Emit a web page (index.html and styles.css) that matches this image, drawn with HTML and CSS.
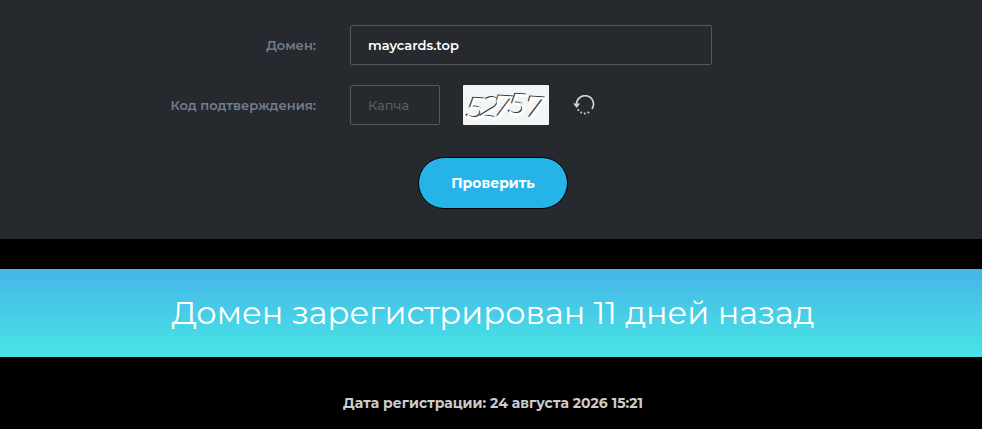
FILE: index.html
```
<!DOCTYPE html>
<html lang="ru">
<head>
    <meta charset="UTF-8">
    <meta name="viewport" content="width=device-width, initial-scale=1.0">
    <title>Проверка домена</title>
    <link rel="stylesheet" href="styles.css">
</head>
<body>
    <form class="check-form">
        <div class="row">
            <label for="domain">Домен:</label>
            <input type="text" id="domain" class="field" value="maycards.top">
        </div>
        <div class="row">
            <label for="captcha">Код подтверждения:</label>
            <div class="captcha">
                <input type="text" id="captcha" class="field field-short" placeholder="Капча">
                <svg class="captcha-image" width="86" height="40" viewBox="0 0 86 40" role="img" aria-label="Код">
                    <rect width="86" height="40" rx="1" fill="#f1f5f6"/>
                    <g class="digits">
                        <text x="4" y="34" transform="rotate(3 12 22)">5</text>
                        <text x="19" y="33" transform="rotate(8 27 22)">2</text>
                        <text x="31" y="32" transform="rotate(4 40 22)">7</text>
                        <text x="46" y="30" transform="rotate(3 54 20)">5</text>
                        <text x="63" y="33" transform="rotate(4 73 22)">7</text>
                    </g>
                </svg>
                <button type="button" class="refresh" aria-label="Обновить код">
                    <svg width="22" height="20" viewBox="0 0 22 20" fill="none">
                        <path d="M3.5 9.5A8.5 8.5 0 1 1 19 14" stroke="#d0d3d6" stroke-width="1.7"/>
                        <path d="M0 8.5H7.2L3.7 13Z" fill="#d0d3d6"/>
                        <g fill="#d0d3d6">
                            <circle cx="5.3" cy="15" r="1"/>
                            <circle cx="8.2" cy="17.5" r="1"/>
                            <circle cx="11.8" cy="18.5" r="1"/>
                            <circle cx="15.4" cy="17.5" r="1"/>
                        </g>
                    </svg>
                </button>
            </div>
        </div>
        <button type="submit" class="submit">Проверить</button>
    </form>

    <h1 class="result">Домен зарегистрирован 11 дней назад</h1>
    <p class="date">Дата регистрации: 24 августа 2026 15:21</p>
</body>
</html>
```
FILE: styles.css
```
* { box-sizing: border-box; }
body { margin: 0; background: #000; color: #ccc; font-family: Montserrat, Inter, "Open Sans", sans-serif; font-size: 14px; }

.check-form { padding: 25px 16px 30px 20px; background: #26292e; }
.row { display: grid; grid-template-columns: 216px 362px; column-gap: 34px; align-items: center; max-width: 786px; margin: 0 auto 20px; }
.row label { color: #717e91; font-size: 13px; font-weight: 600; text-align: right; }
.field { width: 100%; height: 40px; padding: 0 17px; border: 1px solid #55585c; border-radius: 2px; background: transparent; color: #fff; font-family: inherit; font-size: 13px; font-weight: 600; }
.field::placeholder { color: #5c5c5c; font-weight: 500; opacity: 1; }
.field-short { width: 90px; }

.captcha { display: flex; align-items: center; }
.captcha-image { margin-left: 23px; overflow: visible; }
.digits { fill: #fff; font-family: Montserrat, "Open Sans", sans-serif; font-size: 30px; font-style: italic; font-weight: 400; text-shadow: -1px -1px 0 #333, 0 0 2px #fff, 1px 1px 2px #fff; }
.refresh { display: flex; margin-left: 24px; padding: 0; border: 0; background: none; cursor: pointer; }

.submit { display: block; width: 150px; height: 52px; margin: 32px auto 0; border: 1px solid #000; border-radius: 26px; background: #26b3e8; color: #fff; font-family: inherit; font-size: 14px; font-weight: 700; cursor: pointer; }

.result { margin: 30px 0 0; padding: 24px 16px 24px 20px; background: linear-gradient(#46b5e6, #48e5e6); color: #fff; font-size: 32px; font-weight: 400; line-height: 40px; text-align: center; }
.date { margin: 36px 0 0; padding: 0 16px 16px 20px; font-size: 14px; font-weight: 700; line-height: 20px; text-align: center; }
```
